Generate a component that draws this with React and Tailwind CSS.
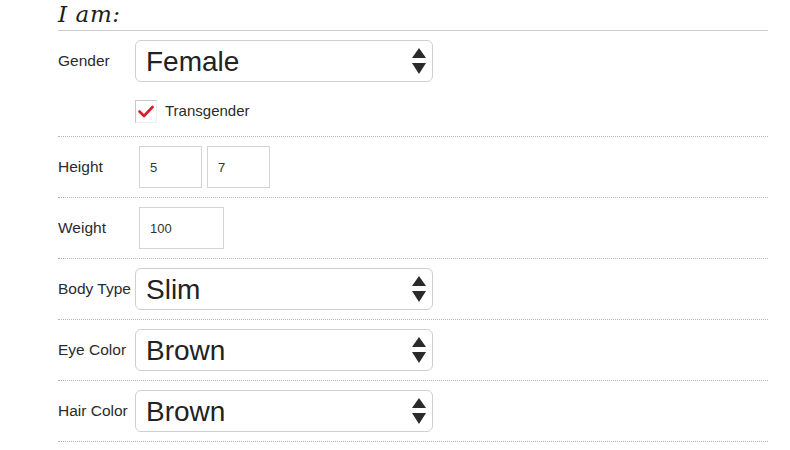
import { useState } from 'react'

const sans = { fontFamily: '"Liberation Sans", Arial, sans-serif' }

function Arrows() {
  return (
    <svg className="pointer-events-none absolute right-[7px] top-1/2 -translate-y-1/2" width="14" height="26" viewBox="0 0 14 26">
      <path d="M7 0 L14 10 L0 10 Z" fill="#2a2a2a" />
      <path d="M0 15 L14 15 L7 26 Z" fill="#2a2a2a" />
    </svg>
  )
}

function Select({ value, options }) {
  const [v, setV] = useState(value)
  return (
    <div className="relative h-[42px] w-[298px]">
      <select
        value={v}
        onChange={(e) => setV(e.target.value)}
        className="h-full w-full appearance-none rounded-[6px] border border-[#cfcfcf] bg-white pl-[10px] text-[28px] text-[#222] outline-none"
        style={sans}
      >
        {options.map((o) => (
          <option key={o}>{o}</option>
        ))}
      </select>
      <Arrows />
    </div>
  )
}

function Field({ label, children }) {
  return (
    <div className="flex items-center border-b border-dotted border-[#b5b5b5] py-[9px]">
      <div className="w-[77px] shrink-0 text-[15.5px] text-[#2b2b2b]">{label}</div>
      {children}
    </div>
  )
}

function Box({ value, w }) {
  return (
    <input
      defaultValue={value}
      className={`h-[42px] ${w} border border-[#d4d4d4] bg-white pl-[10px] text-[13px] text-[#333] outline-none`}
      style={sans}
    />
  )
}

export default function App() {
  const [trans, setTrans] = useState(true)

  return (
    <div className="min-h-[450px] bg-white" style={sans}>
      <div className="ml-[58px] w-[710px]">
        <h2
          className="border-b border-[#cccccc] pb-[4px] pt-[3px] text-[23px] italic leading-[23px] tracking-[0.6px] text-[#1e1e1e]"
          style={{ fontFamily: '"DejaVu Serif", Georgia, serif' }}
        >
          I am:
        </h2>

        {/* Gender */}
        <div className="border-b border-dotted border-[#b5b5b5] pb-[13px] pt-[9px]">
          <div className="flex items-center">
            <div className="w-[77px] shrink-0 text-[15.5px] text-[#2b2b2b]">Gender</div>
            <Select value="Female" options={['Female', 'Male']} />
          </div>
          <label className="ml-[77px] mt-[18px] flex h-[23px] cursor-pointer items-center gap-[8px]">
            <span
              onClick={() => setTrans(!trans)}
              className="flex h-[23px] w-[22px] items-center justify-center border-b border-l border-r border-t border-[#c8c8c8] border-b-[#eee] border-r-[#eee] bg-white"
            >
              {trans && (
                <svg width="16" height="13" viewBox="0 0 16 13">
                  <path d="M1.5 6.5 L6 11 L14.5 2" fill="none" stroke="#d4202e" strokeWidth="2.6" strokeLinecap="round" strokeLinejoin="round" />
                </svg>
              )}
            </span>
            <span className="text-[15px] text-[#2b2b2b]">Transgender</span>
          </label>
        </div>

        <Field label="Height">
          <div className="ml-[4px] flex gap-[5px]">
            <Box value="5" w="w-[63px]" />
            <Box value="7" w="w-[63px]" />
          </div>
        </Field>

        <Field label="Weight">
          <div className="ml-[4px]">
            <Box value="100" w="w-[85px]" />
          </div>
        </Field>

        <Field label="Body Type">
          <Select value="Slim" options={['Slim', 'Average', 'Athletic']} />
        </Field>

        <Field label="Eye Color">
          <Select value="Brown" options={['Brown', 'Blue', 'Green']} />
        </Field>

        <Field label="Hair Color">
          <Select value="Brown" options={['Brown', 'Black', 'Blonde']} />
        </Field>
      </div>
    </div>
  )
}
